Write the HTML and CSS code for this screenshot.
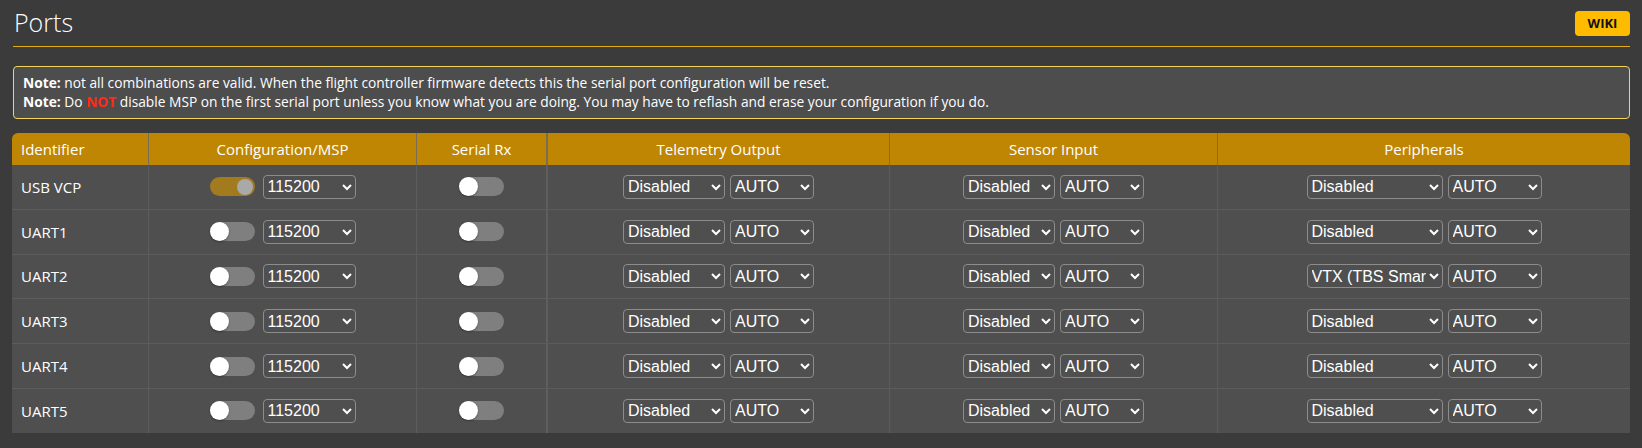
FILE: index.html
```html
<!DOCTYPE html>
<html>
<head>
<meta charset="utf-8">
<link rel="stylesheet" href="styles.css">
</head>
<body>
<div class="page">
  <div class="title-row">
    <h1 class="title">Ports</h1>
    <a class="wiki">WIKI</a>
  </div>
  <div class="note">
    <p><b>Note:</b> not all combinations are valid. When the flight controller firmware detects this the serial port configuration will be reset.</p>
    <p><b>Note:</b> Do <span class="red">NOT</span> disable MSP on the first serial port unless you know what you are doing. You may have to reflash and erase your configuration if you do.</p>
  </div>
  <table class="ports">
    <colgroup>
      <col class="c1"><col class="c2"><col class="c3"><col class="c4"><col class="c5"><col class="c6">
    </colgroup>
    <thead>
      <tr>
        <th class="left">Identifier</th>
        <th>Configuration/MSP</th>
        <th>Serial Rx</th>
        <th>Telemetry Output</th>
        <th>Sensor Input</th>
        <th>Peripherals</th>
      </tr>
    </thead>
    <tbody>
      <tr>
        <td class="left">USB VCP</td>
        <td><div class="cell"><span class="toggle on"><span class="knob"></span></span><select class="s-baud"><option>115200</option></select></div></td>
        <td><div class="cell"><span class="toggle"><span class="knob"></span></span></div></td>
        <td><div class="cell"><select class="s-tel"><option>Disabled</option></select><select class="s-auto"><option>AUTO</option></select></div></td>
        <td><div class="cell"><select class="s-sen"><option>Disabled</option></select><select class="s-auto2"><option>AUTO</option></select></div></td>
        <td><div class="cell"><select class="s-per"><option>Disabled</option></select><select class="s-auto3"><option>AUTO</option></select></div></td>
      </tr>
      <tr>
        <td class="left">UART1</td>
        <td><div class="cell"><span class="toggle"><span class="knob"></span></span><select class="s-baud"><option>115200</option></select></div></td>
        <td><div class="cell"><span class="toggle"><span class="knob"></span></span></div></td>
        <td><div class="cell"><select class="s-tel"><option>Disabled</option></select><select class="s-auto"><option>AUTO</option></select></div></td>
        <td><div class="cell"><select class="s-sen"><option>Disabled</option></select><select class="s-auto2"><option>AUTO</option></select></div></td>
        <td><div class="cell"><select class="s-per"><option>Disabled</option></select><select class="s-auto3"><option>AUTO</option></select></div></td>
      </tr>
      <tr>
        <td class="left">UART2</td>
        <td><div class="cell"><span class="toggle"><span class="knob"></span></span><select class="s-baud"><option>115200</option></select></div></td>
        <td><div class="cell"><span class="toggle"><span class="knob"></span></span></div></td>
        <td><div class="cell"><select class="s-tel"><option>Disabled</option></select><select class="s-auto"><option>AUTO</option></select></div></td>
        <td><div class="cell"><select class="s-sen"><option>Disabled</option></select><select class="s-auto2"><option>AUTO</option></select></div></td>
        <td><div class="cell"><select class="s-per"><option>VTX (TBS SmartAudio)</option></select><select class="s-auto3"><option>AUTO</option></select></div></td>
      </tr>
      <tr>
        <td class="left">UART3</td>
        <td><div class="cell"><span class="toggle"><span class="knob"></span></span><select class="s-baud"><option>115200</option></select></div></td>
        <td><div class="cell"><span class="toggle"><span class="knob"></span></span></div></td>
        <td><div class="cell"><select class="s-tel"><option>Disabled</option></select><select class="s-auto"><option>AUTO</option></select></div></td>
        <td><div class="cell"><select class="s-sen"><option>Disabled</option></select><select class="s-auto2"><option>AUTO</option></select></div></td>
        <td><div class="cell"><select class="s-per"><option>Disabled</option></select><select class="s-auto3"><option>AUTO</option></select></div></td>
      </tr>
      <tr>
        <td class="left">UART4</td>
        <td><div class="cell"><span class="toggle"><span class="knob"></span></span><select class="s-baud"><option>115200</option></select></div></td>
        <td><div class="cell"><span class="toggle"><span class="knob"></span></span></div></td>
        <td><div class="cell"><select class="s-tel"><option>Disabled</option></select><select class="s-auto"><option>AUTO</option></select></div></td>
        <td><div class="cell"><select class="s-sen"><option>Disabled</option></select><select class="s-auto2"><option>AUTO</option></select></div></td>
        <td><div class="cell"><select class="s-per"><option>Disabled</option></select><select class="s-auto3"><option>AUTO</option></select></div></td>
      </tr>
      <tr>
        <td class="left">UART5</td>
        <td><div class="cell"><span class="toggle"><span class="knob"></span></span><select class="s-baud"><option>115200</option></select></div></td>
        <td><div class="cell"><span class="toggle"><span class="knob"></span></span></div></td>
        <td><div class="cell"><select class="s-tel"><option>Disabled</option></select><select class="s-auto"><option>AUTO</option></select></div></td>
        <td><div class="cell"><select class="s-sen"><option>Disabled</option></select><select class="s-auto2"><option>AUTO</option></select></div></td>
        <td><div class="cell"><select class="s-per"><option>Disabled</option></select><select class="s-auto3"><option>AUTO</option></select></div></td>
      </tr>
    </tbody>
  </table>
</div>
</body>
</html>
```
FILE: styles.css
```css
html, body {
  margin: 0;
  padding: 0;
  background: #3a3b3a;
  color: #ffffff;
  font-family: "Open Sans", "Liberation Sans", sans-serif;
  color-scheme: dark;
}

.page {
  padding: 0 12px 0 12px;
}

.title-row {
  display: flex;
  justify-content: space-between;
  align-items: flex-start;
  margin-left: 1px;
  height: 46px;
  border-bottom: 1px solid #e3ac14;
}

.title {
  margin: 0;
  padding-top: 4px;
  padding-left: 1px;
  font-size: 25px;
  font-weight: 300;
  line-height: 36px;
  color: #ffffff;
}

.wiki {
  margin-top: 11px;
  width: 55px;
  height: 25px;
  box-sizing: border-box;
  background: #ffbb00;
  color: #111111;
  border-radius: 4px;
  font-size: 13px;
  font-weight: 700;
  line-height: 25px;
  text-align: center;
}

.note {
  margin: 19px 0 0 1px;
  height: 53px;
  box-sizing: border-box;
  border: 1px solid #f2d35c;
  border-radius: 4px;
  background: #4d4d4d;
  padding: 6px 9px 0 9px;
  font-size: 13.75px;
  line-height: 19px;
}

.note p {
  margin: 0;
}

.note b {
  font-weight: 700;
}

.red {
  color: #ff2a1a;
  font-weight: 700;
}

.ports {
  margin-top: 14px;
  width: 1618px;
  border-collapse: separate;
  border-spacing: 0;
  table-layout: fixed;
  font-size: 15px;
}

.c1 { width: 136px; }
.c2 { width: 268px; }
.c3 { width: 130px; }
.c4 { width: 343px; }
.c5 { width: 328px; }
.c6 { width: 413px; }

.ports th {
  background: #bf8604;
  height: 32px;
  padding: 0;
  font-weight: 400;
  font-size: 15px;
  color: #ffffff;
  text-align: center;
  border-left: 1px solid #7a6d55;
}

.ports th:first-child {
  border-left: none;
  border-top-left-radius: 6px;
}

.ports th:last-child {
  border-top-right-radius: 6px;
}

.ports td {
  background: #4f4f4f;
  height: 43.8px;
  padding: 0;
  border-left: 1px solid #5c5c5c;
  border-top: 1px solid #5c5c5c;
  font-size: 15px;
  text-align: center;
}

.ports tbody tr:first-child td {
  border-top: none;
}

.ports td:first-child {
  border-left: none;
}

.ports .left {
  text-align: left;
  padding-left: 9px;
}

.ports td:nth-child(4) {
  border-left: 2px solid #5e5e5e;
}

.ports th:nth-child(4) {
  border-left: 2px solid #7a6d55;
}

.cell {
  display: flex;
  justify-content: center;
  align-items: center;
  gap: 5px;
}

.toggle {
  position: relative;
  display: inline-block;
  width: 45px;
  height: 19px;
  border-radius: 10px;
  background: #7f7f7f;
  margin-right: 3px;
}

.toggle .knob {
  position: absolute;
  left: 0;
  top: 0;
  width: 19px;
  height: 19px;
  border-radius: 50%;
  background: #ffffff;
  box-shadow: 0 1px 2px rgba(0, 0, 0, 0.35);
}

.toggle.on {
  background: #a37b1f;
}

.toggle.on .knob {
  left: auto;
  right: 2px;
  top: 2px;
  width: 16px;
  height: 16px;
  background: #a9a9a9;
  box-shadow: none;
}

.cell .toggle:only-child {
  margin-right: 0;
}

select {
  height: 24px;
  box-sizing: border-box;
  background: #4f4f4f;
  color: #ffffff;
  border: 1px solid #8c8c8c;
  border-radius: 4px;
  font-family: "Liberation Sans", Arial, sans-serif;
  font-size: 16px;
  padding: 0;
  margin: 0;
}

.s-baud { width: 93px; }
.s-tel { width: 102px; }
.s-auto { width: 84px; }
.s-sen { width: 92px; }
.s-auto2 { width: 84px; }
.s-per { width: 136px; }
.s-auto3 { width: 94px; }
```
